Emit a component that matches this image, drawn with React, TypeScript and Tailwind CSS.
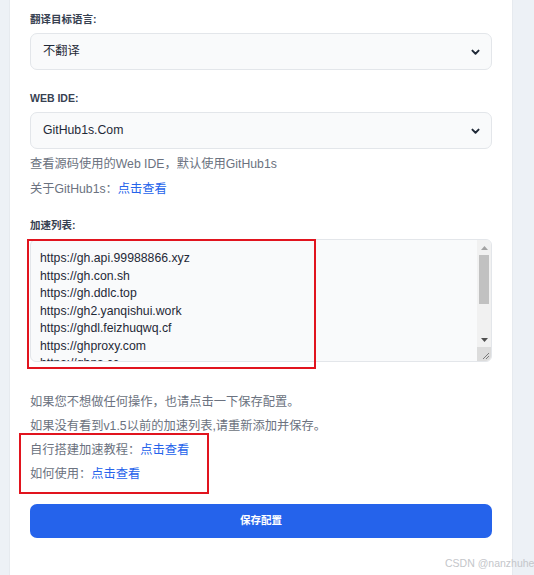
const FONT = { fontFamily: '"Liberation Sans", "Noto Sans CJK SC", sans-serif' };

const proxies = [
  'https://gh.api.99988866.xyz',
  'https://gh.con.sh',
  'https://gh.ddlc.top',
  'https://gh2.yanqishui.work',
  'https://ghdl.feizhuqwq.cf',
  'https://ghproxy.com',
  'https://ghps.cc',
];

function Chevron() {
  return (
    <svg
      viewBox="0 0 16 16"
      className="pointer-events-none absolute right-[11px] top-1/2 h-[11px] w-[11px] -translate-y-1/2 text-[#1f2937]"
      fill="none"
      stroke="currentColor"
      strokeWidth={2.8}
      strokeLinecap="round"
      strokeLinejoin="round"
    >
      <path d="M3.5 6l4.5 4.5L12.5 6" />
    </svg>
  );
}

function Select({ value }: { value: string }) {
  return (
    <div className="relative">
      <select
        defaultValue={value}
        className="block h-[37px] w-full appearance-none rounded-[7px] border border-[#e3e6ea] bg-[#f9fafb] pl-[12px] pr-8 text-[12.25px] text-[#1f2937] outline-none"
        style={FONT}
      >
        <option>{value}</option>
      </select>
      <Chevron />
    </div>
  );
}

function Label({ children }: { children: React.ReactNode }) {
  return <div className="mb-[7px] text-[10.5px] font-bold leading-[14px] text-[#374151]">{children}</div>;
}

// textarea with a classic scrollbar + resize grip
function ProxyList() {
  return (
    <div className="flex h-[123px] w-full overflow-hidden rounded-[6px] border border-[#e3e6ea] bg-[#f9fafb]">
      <div className="h-full flex-1 overflow-hidden pl-[9px] pt-[10px] text-[12.25px] leading-[17.5px] text-[#1f2937]">
        {proxies.map((p) => (
          <div key={p} className="whitespace-nowrap">
            {p}
          </div>
        ))}
      </div>
      <div className="flex w-[14px] flex-col bg-[#f1f1f1]">
        <div className="flex h-[15px] items-center justify-center">
          <svg width="7" height="4" viewBox="0 0 7 4">
            <path d="M0 4L3.5 0L7 4Z" fill="#a3a3a3" />
          </svg>
        </div>
        <div className="flex-1 px-[2px]">
          <div className="h-[49px] bg-[#c1c1c1]" />
        </div>
        <div className="flex h-[15px] items-center justify-center">
          <svg width="7" height="4" viewBox="0 0 7 4">
            <path d="M0 0L7 0L3.5 4Z" fill="#505050" />
          </svg>
        </div>
        <div className="relative h-[14px] bg-[#dcdcdc]">
          <svg className="absolute bottom-[1px] right-[1px]" width="9" height="9" viewBox="0 0 9 9">
            <path d="M8 2L2 8M8 5L5 8" stroke="#7a7a7a" strokeWidth="1" />
          </svg>
        </div>
      </div>
    </div>
  );
}

export default function App() {
  return (
    <div className="relative min-h-[575px] overflow-hidden bg-[#edf1f6] pl-[9px]" style={FONT}>
      <div className="relative h-[575px] w-[504px] border-x border-[#e6eaef] bg-white px-[20px] pt-[12px]">
        <Label>翻译目标语言:</Label>
        <Select value="不翻译" />

        <div className="mt-[21px]">
          <Label>WEB IDE:</Label>
          <Select value="GitHub1s.Com" />
        </div>
        <div className="mt-[3px] text-[12.25px] leading-[25px] text-[#6b7280]">
          <p>查看源码使用的Web IDE，默认使用GitHub1s</p>
          <p>
            关于GitHub1s：<span className="text-[#2563eb]">点击查看</span>
          </p>
        </div>

        <div className="mt-[16px]">
          <Label>加速列表:</Label>
          <ProxyList />
        </div>

        <div className="mt-[28px] text-[12.25px] leading-[24px] text-[#6b7280]">
          <p>如果您不想做任何操作，也请点击一下保存配置。</p>
          <p>如果没有看到v1.5以前的加速列表,请重新添加并保存。</p>
          <p>
            自行搭建加速教程：<span className="text-[#2563eb]">点击查看</span>
          </p>
          <p>
            如何使用：<span className="text-[#2563eb]">点击查看</span>
          </p>
        </div>

        <button
          type="button"
          className="mt-[18px] h-[34px] w-full rounded-[7px] bg-[#2563eb] text-[10.5px] font-bold text-white"
          style={FONT}
        >
          保存配置
        </button>

        {/* annotation boxes */}
        <div className="pointer-events-none absolute left-[17px] top-[239px] h-[130px] w-[289px] border-2 border-[#e1141e]" />
        <div className="pointer-events-none absolute left-[9px] top-[433px] h-[61px] w-[190px] border-2 border-[#e1141e]" />
      </div>

      <div className="pointer-events-none absolute left-[445px] top-[556px] whitespace-nowrap text-[10.5px] leading-[14px] text-[#c4c6ca]">
        CSDN @nanzhuhe
      </div>
    </div>
  );
}
